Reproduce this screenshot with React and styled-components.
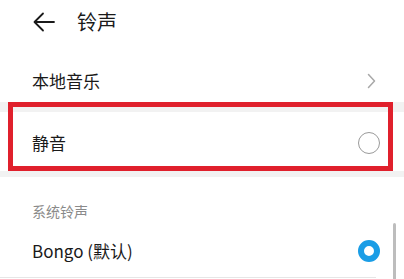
import React from "react";
import styled, { createGlobalStyle } from "styled-components";

const GlobalStyle = createGlobalStyle`
  html, body { margin: 0; padding: 0; background: #fff; }
  body { font-family: "Noto Sans CJK SC", "Noto Sans", sans-serif; }
`;

const Page = styled.div`
  position: relative;
  width: 404px;
  height: 279px;
  overflow: hidden;
  background: #fff;
`;

const Header = styled.div`
  height: 44px;
  display: flex;
  align-items: center;
  padding-left: 33px;
  gap: 22px;
`;

const Title = styled.div`
  font-size: 20px;
  line-height: 24px;
  color: #1a1a1a;
`;

const Row = styled.div`
  display: flex;
  align-items: center;
  justify-content: space-between;
  height: ${(p) => p.$h}px;
  padding: ${(p) => p.$pt || 0}px ${(p) => p.$pr || 24}px 0 32px;
  box-sizing: border-box;
  border-bottom: ${(p) => (p.$divider ? "1px solid #e6e6e6" : "none")};
  margin-right: ${(p) => (p.$divider ? 28 : 0)}px;
  padding-right: ${(p) => (p.$divider ? 0 : p.$pr || 24)}px;
`;

const Label = styled.div`
  font-size: 17px;
  line-height: 22px;
  color: #1a1a1a;
`;

const Band = styled.div`
  height: ${(p) => p.$h}px;
  background: #f2f2f2;
`;

const SectionTitle = styled.div`
  padding: 26px 0 6px 32px;
  font-size: 14px;
  line-height: 16px;
  color: #8a8a8a;
`;

const Radio = styled.div`
  width: 22px;
  height: 22px;
  box-sizing: border-box;
  border-radius: 50%;
  border: ${(p) => (p.$checked ? "6px solid #1a9de6" : "1px solid #9a9a9a")};
  background: #fff;
`;

const Scrollbar = styled.div`
  position: absolute;
  left: 393px;
  top: 223px;
  width: 3px;
  height: 60px;
  border-radius: 2px;
  background: #bdbdbd;
`;

const Highlight = styled.div`
  position: absolute;
  left: 8px;
  top: 102px;
  width: 385px;
  height: 69px;
  box-sizing: border-box;
  border: 5px solid #e0202c;
  pointer-events: none;
`;

const BackArrow = () => (
  <svg width="22" height="20" viewBox="0 0 22 20" fill="none">
    <path d="M21 10H2M10 1.5L1.5 10L10 18.5" stroke="#1a1a1a" strokeWidth="1.8" strokeLinecap="round" strokeLinejoin="round" />
  </svg>
);

const Chevron = () => (
  <svg width="9" height="16" viewBox="0 0 9 16" fill="none">
    <path d="M1.5 1.5L7.5 8L1.5 14.5" stroke="#a8a8a8" strokeWidth="1.5" strokeLinecap="round" strokeLinejoin="round" />
  </svg>
);

export default function App() {
  return (
    <>
      <GlobalStyle />
      <Page>
        <Header>
          <BackArrow />
          <Title>铃声</Title>
        </Header>
        <Row $h={58} $pt={16} $pr={28}>
          <Label>本地音乐</Label>
          <Chevron />
        </Row>
        <Band $h={10} />
        <Row $h={59} $pt={2}>
          <Label>静音</Label>
          <Radio />
        </Row>
        <Band $h={6} />
        <SectionTitle>系统铃声</SectionTitle>
        <Row $h={53} $divider>
          <Label>Bongo (默认)</Label>
          <Radio $checked style={{ marginRight: -4 }} />
        </Row>
        <Scrollbar />
        <Highlight />
      </Page>
    </>
  );
}
